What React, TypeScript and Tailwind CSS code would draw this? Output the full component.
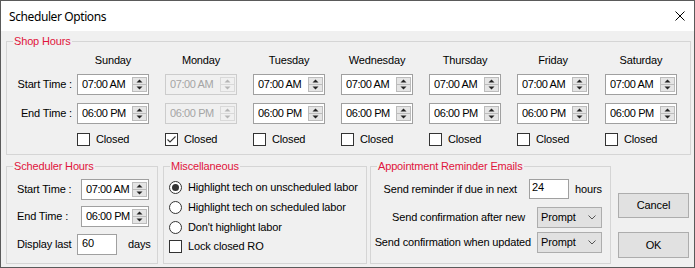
import React from "react";

const UpDown = ({ disabled }: { disabled?: boolean }) => {
  const c = disabled ? "#b5b5b5" : "#222222";
  return (
    <div
      className={`flex h-[15px] w-[15px] shrink-0 flex-col border ${
        disabled ? "border-[#d9d9d9] bg-[#f0f0f0]" : "border-[#bcbcbc] bg-[#e5e5e5]"
      }`}
    >
      <div className="flex flex-1 items-center justify-center">
        <svg width="7" height="4" viewBox="0 0 7 4">
          <path d="M0.5 3.5 L3.5 0.5 L6.5 3.5 Z" fill={c} />
        </svg>
      </div>
      <div className={`h-[1px] ${disabled ? "bg-[#d9d9d9]" : "bg-[#bcbcbc]"}`} />
      <div className="flex flex-1 items-center justify-center">
        <svg width="7" height="4" viewBox="0 0 7 4">
          <path d="M0.5 0.5 L3.5 3.5 L6.5 0.5 Z" fill={c} />
        </svg>
      </div>
    </div>
  );
};

const Spinner = ({
  value,
  disabled,
  w = "w-[72px]",
}: {
  value: string;
  disabled?: boolean;
  w?: string;
}) => (
  <div
    className={`flex h-[21px] ${w} items-center border pl-[4px] pr-[1px] ${
      disabled ? "border-[#cccccc] bg-[#f0f0f0] text-[#a5a5a5]" : "border-[#a0a0a0] bg-white text-black"
    }`}
  >
    <span className="flex-1 overflow-hidden whitespace-nowrap tracking-[-0.4px]">{value}</span>
    <UpDown disabled={disabled} />
  </div>
);

const Checkbox = ({ checked }: { checked?: boolean }) => (
  <div className="flex h-[13px] w-[13px] shrink-0 items-center justify-center border border-[#333333] bg-white">
    {checked && (
      <svg width="11" height="11" viewBox="0 0 11 11">
        <path d="M1.5 5.5 L4 8 L9.5 2.5" fill="none" stroke="#333333" strokeWidth="1.1" />
      </svg>
    )}
  </div>
);

const Radio = ({ checked }: { checked?: boolean }) => (
  <div className="flex h-[13px] w-[13px] shrink-0 items-center justify-center rounded-full border border-[#333333] bg-white">
    {checked && <div className="h-[7px] w-[7px] rounded-full bg-[#333333]" />}
  </div>
);

const Group = ({
  title,
  className,
  children,
}: {
  title: string;
  className: string;
  children: React.ReactNode;
}) => (
  <div className={`relative border border-[#d5d5d5] ${className}`}>
    <span className="absolute left-[6px] top-[-7px] bg-[#f0f0f0] px-[1px] leading-[13px] text-[#e0143c]">
      {title}
    </span>
    {children}
  </div>
);

const Dropdown = () => (
  <div className="flex h-[21px] w-[65px] items-center justify-between border border-[#adadad] bg-[#e1e1e1] pl-[3px] pr-[5px]">
    <span>Prompt</span>
    <svg width="8" height="5" viewBox="0 0 8 5">
      <path d="M0.5 0.5 L4 4 L7.5 0.5" fill="none" stroke="#555555" strokeWidth="1" />
    </svg>
  </div>
);

const days = ["Sunday", "Monday", "Tuesday", "Wednesday", "Thursday", "Friday", "Saturday"];

export default function App() {
  return (
    <div className="flex h-[268px] w-[695px] flex-col overflow-hidden border border-[#5a5a5a] bg-[#f0f0f0] font-['Liberation_Sans',Arial,sans-serif] text-[11px] leading-[13px] tracking-[-0.15px] text-black">
      <div className="flex h-[30px] shrink-0 items-center justify-between bg-white pl-[8px] pr-[9px]">
        <span className="font-['Noto_Sans',sans-serif] text-[12px] tracking-[-0.4px]">Scheduler Options</span>
        <svg width="10" height="10" viewBox="0 0 10 10">
          <path d="M0.5 0.5 L9.5 9.5 M9.5 0.5 L0.5 9.5" stroke="#000" strokeWidth="1" />
        </svg>
      </div>

      <div className="flex flex-col px-[5px] pt-[10px]">
        <Group title="Shop Hours" className="h-[114px] w-[685px]">
          <div className="flex pt-[12px]">
            <div className="flex w-[70px] flex-col items-end pr-[5px]">
              <div className="h-[13px]" />
              <div className="mt-[7px] flex h-[21px] items-center">Start Time :</div>
              <div className="mt-[8px] flex h-[21px] items-center">End Time :</div>
            </div>
            <div className="flex gap-[16px]">
              {days.map((d) => {
                const dis = d === "Monday";
                return (
                  <div key={d} className="flex w-[72px] flex-col">
                    <div className="h-[13px] text-center">{d}</div>
                    <div className="mt-[7px]">
                      <Spinner value="07:00 AM" disabled={dis} />
                    </div>
                    <div className="mt-[8px]">
                      <Spinner value="06:00 PM" disabled={dis} />
                    </div>
                    <div className="mt-[9px] flex h-[13px] items-center gap-[6px]">
                      <Checkbox checked={dis} />
                      <span>Closed</span>
                    </div>
                  </div>
                );
              })}
            </div>
          </div>
        </Group>

        <div className="mt-[11px] flex items-start">
          <Group title="Scheduler Hours" className="h-[98px] w-[152px]">
            <div className="flex flex-col pl-[10px] pt-[12px]">
              <div className="flex h-[21px] items-center">
                <span className="w-[64px]">Start Time :</span>
                <Spinner value="07:00 AM" w="w-[68px]" />
              </div>
              <div className="mt-[6px] flex h-[21px] items-center">
                <span className="w-[64px]">End Time :</span>
                <Spinner value="06:00 PM" w="w-[68px]" />
              </div>
              <div className="mt-[7px] flex h-[21px] items-center">
                <span className="w-[60px]">Display last</span>
                <div className="h-[21px] w-[40px] border border-[#a0a0a0] bg-white pl-[4px] pt-[2px]">60</div>
                <span className="ml-[11px]">days</span>
              </div>
            </div>
          </Group>

          <Group title="Miscellaneous" className="ml-[5px] h-[98px] w-[204px]">
            <div className="flex flex-col pl-[5px] pt-[10px]">
              <div className="flex h-[20px] items-center gap-[6px]">
                <Radio checked />
                <span>Highlight tech on unscheduled labor</span>
              </div>
              <div className="flex h-[20px] items-center gap-[6px]">
                <Radio />
                <span>Highlight tech on scheduled labor</span>
              </div>
              <div className="flex h-[20px] items-center gap-[6px]">
                <Radio />
                <span>Don't highlight labor</span>
              </div>
              <div className="flex h-[18px] items-center gap-[6px]">
                <Checkbox />
                <span>Lock closed RO</span>
              </div>
            </div>
          </Group>

          <Group title="Appointment Reminder Emails" className="ml-[3px] h-[98px] w-[241px]">
            <div className="flex flex-col pt-[12px]">
              <div className="flex h-[20px] items-center">
                <span className="w-[146px] whitespace-nowrap text-right">Send reminder if due in next</span>
                <div className="ml-[12px] h-[20px] w-[40px] border border-[#a0a0a0] bg-white pl-[2px] pt-[1px]">24</div>
                <span className="ml-[6px]">hours</span>
              </div>
              <div className="mt-[8px] flex h-[21px] items-center">
                <span className="w-[154px] whitespace-nowrap text-right">Send confirmation after new</span>
                <div className="ml-[12px]">
                  <Dropdown />
                </div>
              </div>
              <div className="mt-[4px] flex h-[21px] items-center">
                <span className="w-[160px] whitespace-nowrap text-right">Send confirmation when updated</span>
                <div className="ml-[6px]">
                  <Dropdown />
                </div>
              </div>
            </div>
          </Group>

          <div className="ml-[7px] mt-[27px] flex w-[71px] flex-col">
            <div className="flex h-[25px] items-center justify-center border border-[#adadad] bg-[#e1e1e1]">
              Cancel
            </div>
            <div className="mt-[14px] flex h-[26px] items-center justify-center border border-[#adadad] bg-[#e1e1e1]">
              OK
            </div>
          </div>
        </div>
      </div>
    </div>
  );
}
